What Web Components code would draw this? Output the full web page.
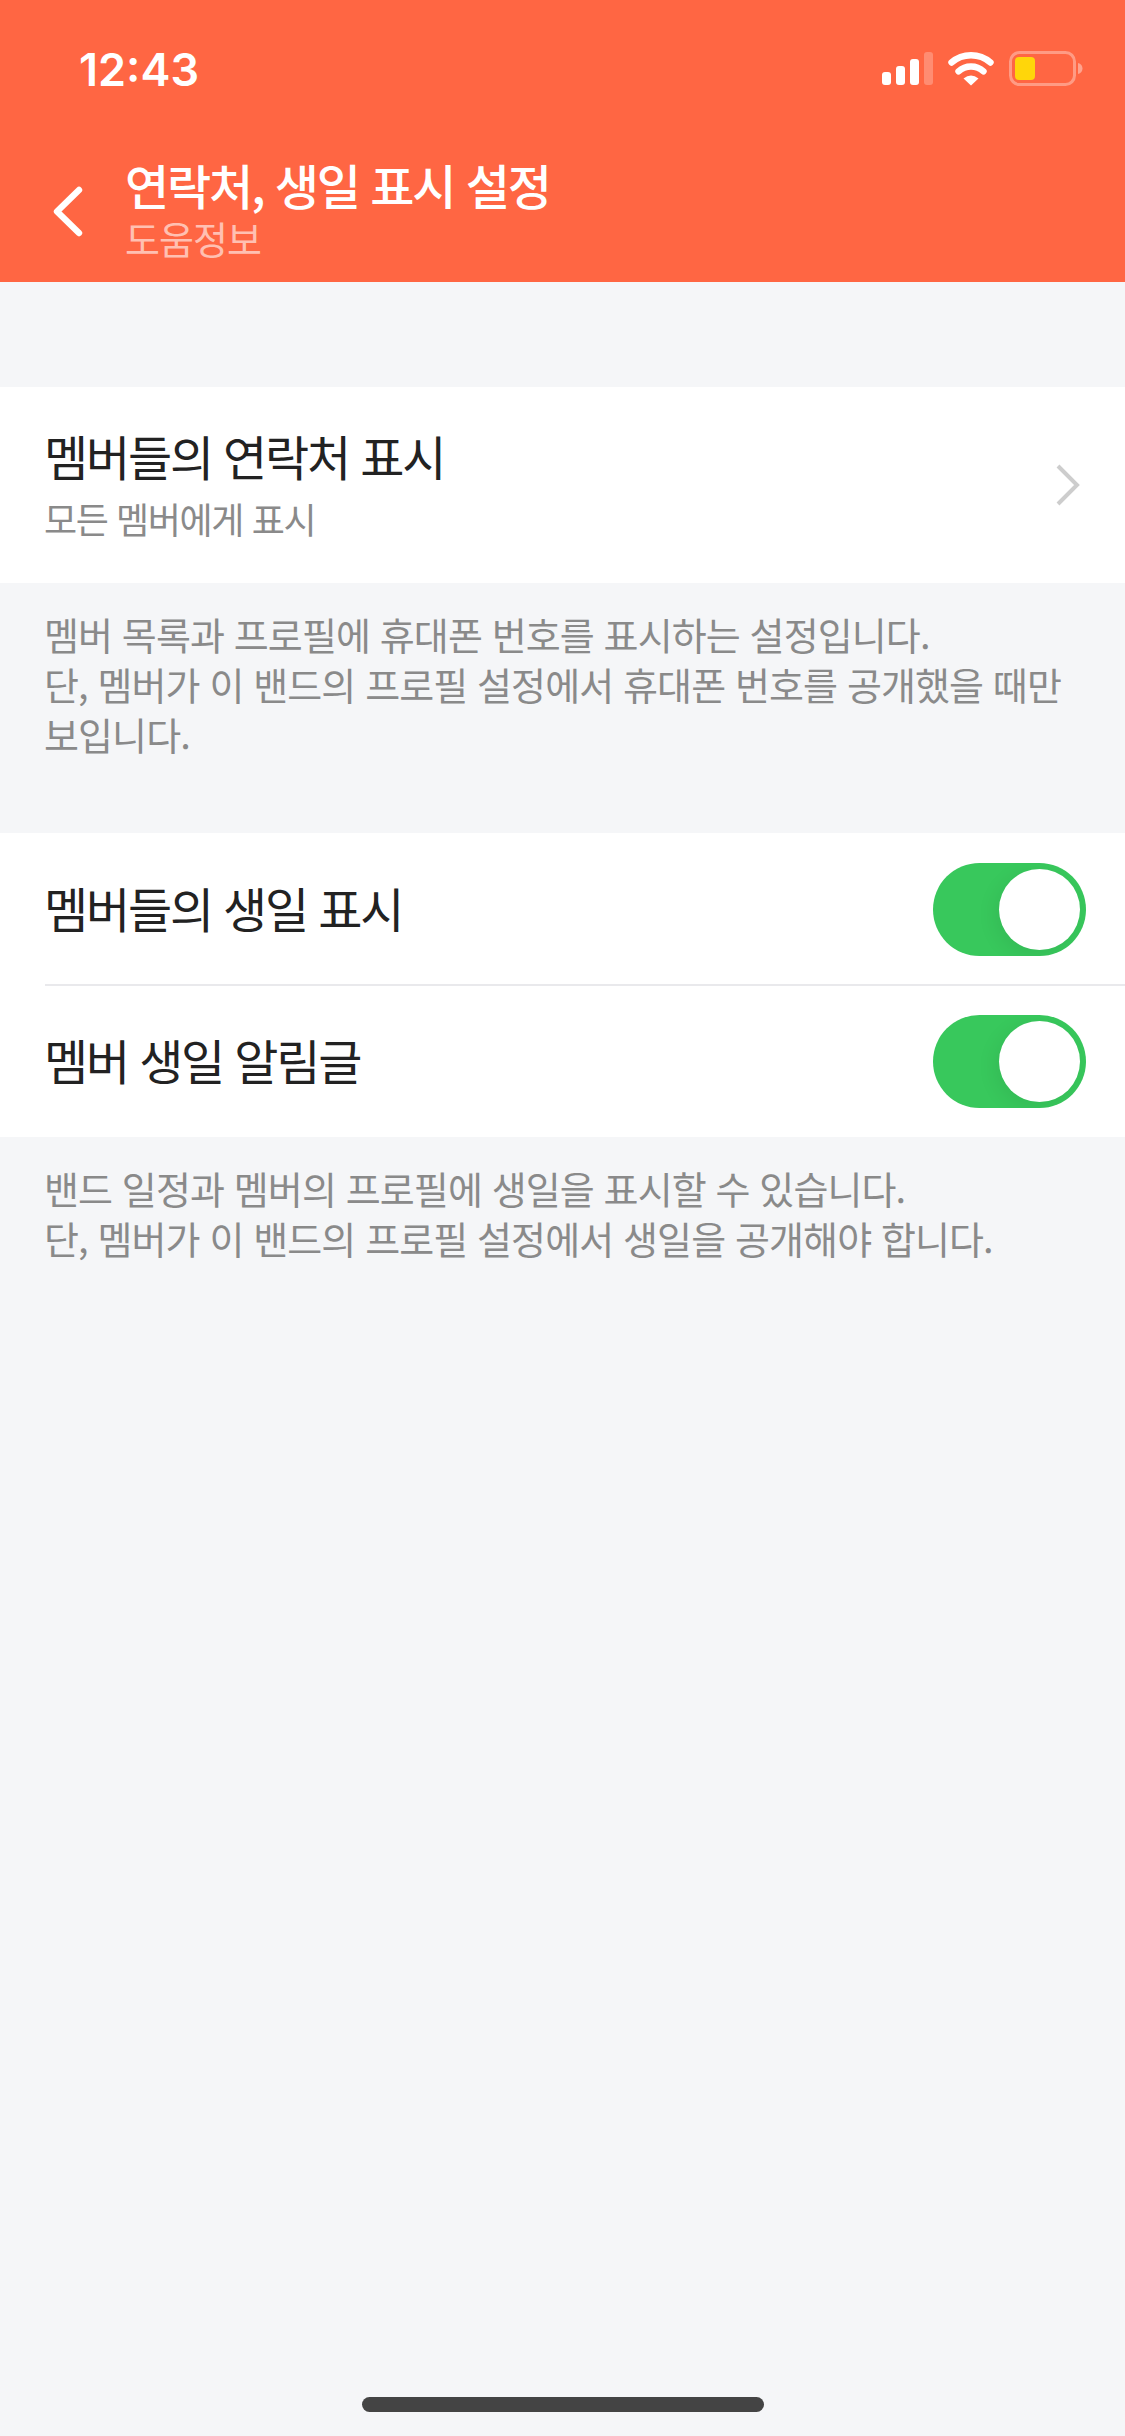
<!DOCTYPE html>
<html lang="ko">
<head>
<meta charset="utf-8">
<title>연락처, 생일 표시 설정</title>
<style>
  html, body { margin: 0; height: 100%; background: #f5f6f8; }
  body { font-family: "Noto Sans CJK KR", "Noto Sans", sans-serif; }
  .page { display: flex; flex-direction: column; min-height: 100%; }
  .grow { flex: 1; }
</style>
</head>
<body>
<div class="page">
  <band-header title="연락처, 생일 표시 설정" subtitle="도움정보"></band-header>

  <setting-group style="margin-top:105px">
    <setting-row heading="멤버들의 연락처 표시" detail="모든 멤버에게 표시">
      <svg slot="end" width="28" height="44" viewBox="0 0 28 44" fill="none" stroke="#cdcdcd" stroke-width="4"><path d="M4 3l19 19L4 41"/></svg>
    </setting-row>
  </setting-group>
  <setting-note>멤버 목록과 프로필에 휴대폰 번호를 표시하는 설정입니다.<br>단, 멤버가 이 밴드의 프로필 설정에서 휴대폰 번호를 공개했을 때만<br>보입니다.</setting-note>

  <setting-group>
    <setting-row heading="멤버들의 생일 표시"><toggle-switch slot="end"></toggle-switch></setting-row>
    <setting-row heading="멤버 생일 알림글" divided><toggle-switch slot="end"></toggle-switch></setting-row>
  </setting-group>
  <setting-note>밴드 일정과 멤버의 프로필에 생일을 표시할 수 있습니다.<br>단, 멤버가 이 밴드의 프로필 설정에서 생일을 공개해야 합니다.</setting-note>

  <div class="grow"></div>
  <home-bar></home-bar>
</div>

<script>
class BandHeader extends HTMLElement {
  static get is() { return "band-header"; }
  constructor() {
    super();
    this.attachShadow({ mode: "open" });
  }
  connectedCallback() {
    this.shadowRoot.innerHTML = `
      <style>
        :host { display: block; height: 282px; background: #ff6643; color: #fff; }
        .status { display: flex; align-items: center; justify-content: space-between; height: 138px; padding: 0 42px 0 79px; }
        .time { font: 600 45px/1 Inter, "Liberation Sans", sans-serif; }
        .nav { display: flex; align-items: flex-start; gap: 42px; padding: 17px 0 0 53px; }
        .back { flex: none; display: block; margin-top: 31px; }
        .title { font-size: 48px; font-weight: 500; line-height: 58px; letter-spacing: -2.100px; white-space: nowrap; }
        .sub { font-size: 38px; line-height: 40px; margin-top: 5px; color: rgba(255,255,255,.6); letter-spacing: -1px; }
      </style>
      <div class="status">
        <span class="time">12:43</span>
        <svg width="201" height="36" viewBox="0 0 201 36">
          <g fill="#fff">
            <rect x="0" y="21" width="9" height="13" rx="3"/>
            <rect x="14" y="15" width="9" height="19" rx="3"/>
            <rect x="28" y="8" width="9" height="26" rx="3"/>
            <rect x="42" y="1" width="9" height="33" rx="3" opacity=".25"/>
            <path d="M69.500 11.500A29.800 29.800 0 0 1 108.500 11.500" fill="none" stroke="#fff" stroke-width="6.400" stroke-linecap="round"/>
            <path d="M76.500 20.400A18.500 18.500 0 0 1 101.500 20.400" fill="none" stroke="#fff" stroke-width="6.400" stroke-linecap="round"/>
            <path d="M81.500 27.500Q89 21.500 96.500 27.500L89 34.500z"/>
          </g>
          <rect x="128.500" y="1.500" width="64" height="32" rx="9" fill="none" stroke="#fff" stroke-opacity=".35" stroke-width="3"/>
          <rect x="133" y="6" width="20" height="23" rx="4" fill="#ffd60a"/>
          <path d="M196 12c3 .5 4.500 3 4.500 5.500S199 22.500 196 23z" fill="#fff" fill-opacity=".4"/>
        </svg>
      </div>
      <div class="nav">
        <svg class="back" width="30" height="52" viewBox="0 0 30 52" fill="none" stroke="#fff" stroke-width="6.400" stroke-linecap="round" stroke-linejoin="round"><path d="M26 4L4 25.500 26 47"/></svg>
        <div>
          <div class="title">${this.getAttribute("title")}</div>
          <div class="sub">${this.getAttribute("subtitle")}</div>
        </div>
      </div>`;
  }
}

class SettingGroup extends HTMLElement {
  static get is() { return "setting-group"; }
  constructor() {
    super();
    this.attachShadow({ mode: "open" });
    this.shadowRoot.innerHTML = `
      <style>:host { display: block; background: #fff; }</style>
      <slot></slot>`;
  }
}

class SettingRow extends HTMLElement {
  static get is() { return "setting-row"; }
  constructor() {
    super();
    this.attachShadow({ mode: "open" });
  }
  connectedCallback() {
    const detail = this.getAttribute("detail");
    this.shadowRoot.innerHTML = `
      <style>
        :host { display: block; padding-left: 44px; }
        .inner { display: flex; align-items: center; justify-content: space-between; min-height: 149px; padding: 2px 39px 0 0; }
        :host([divided]) .inner { border-top: 2px solid #e9e9ec; margin-left: 1px; min-height: 151px; padding-top: 0; }
        :host([divided]) .text { margin-left: -1px; }
        :host([detail]) .inner { min-height: 196px; padding: 0 43px 0 0; }
        .text { padding-bottom: 6px; }
        .heading { font-size: 48px; line-height: 64px; color: #222; letter-spacing: -2.200px; }
        .detail { font-size: 36px; line-height: 48px; margin-top: 7px; color: #8a8a8a; letter-spacing: -1.400px; }
      </style>
      <div class="inner">
        <div class="text">
          <div class="heading">${this.getAttribute("heading")}</div>
          ${detail ? `<div class="detail">${detail}</div>` : ""}
        </div>
        <slot name="end"></slot>
      </div>`;
  }
}

class SettingNote extends HTMLElement {
  static get is() { return "setting-note"; }
  constructor() {
    super();
    this.attachShadow({ mode: "open" });
    this.shadowRoot.innerHTML = `
      <style>
        :host { display: block; padding: 26px 20px 74px 44px; font-size: 38px; line-height: 50px; color: #8a8a8a; letter-spacing: -.900px; }
      </style>
      <slot></slot>`;
  }
}

class ToggleSwitch extends HTMLElement {
  static get is() { return "toggle-switch"; }
  constructor() {
    super();
    this.attachShadow({ mode: "open" });
    this.shadowRoot.innerHTML = `
      <style>
        :host { display: flex; justify-content: flex-end; box-sizing: border-box; width: 153px; height: 93px; padding: 6px; border-radius: 47px; background: #38c85c; overflow: hidden; }
        .knob { width: 81px; height: 81px; border-radius: 50%; background: #fff; box-shadow: -4px 5px 20px rgba(0,0,0,.07); }
      </style>
      <div class="knob"></div>`;
  }
}

class HomeBar extends HTMLElement {
  static get is() { return "home-bar"; }
  constructor() {
    super();
    this.attachShadow({ mode: "open" });
    this.shadowRoot.innerHTML = `
      <style>
        :host { display: flex; justify-content: center; padding-bottom: 24px; }
        div { width: 402px; height: 15px; border-radius: 8px; background: #444; }
      </style>
      <div></div>`;
  }
}

[BandHeader, SettingGroup, SettingRow, SettingNote, ToggleSwitch, HomeBar].forEach((el) => customElements.define(el.is, el));
</script>
</body>
</html>
